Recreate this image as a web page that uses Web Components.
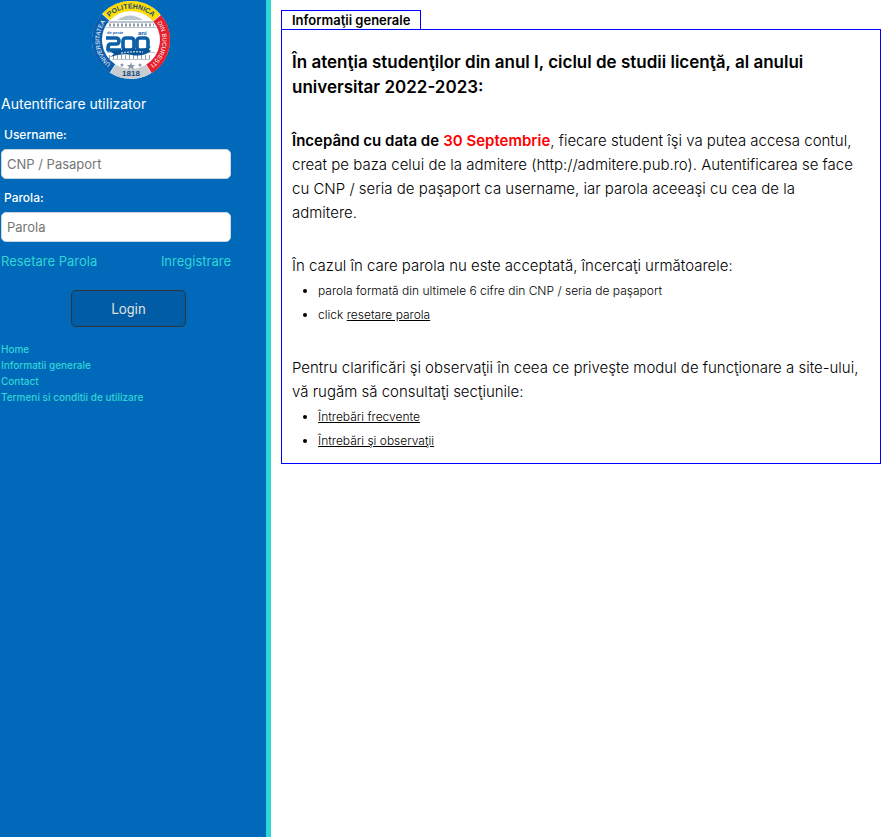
<!DOCTYPE html>
<html lang="ro">
<head>
<meta charset="utf-8">
<meta name="viewport" content="width=device-width, initial-scale=1">
<title>Informaţii generale</title>
<style>
  body { margin: 0; background: #fff; color: #000; font-family: Inter, "Open Sans", sans-serif; font-feature-settings: "locl" 0; }
</style>
</head>
<body>
<portal-layout>
  <portal-sidebar slot="side"></portal-sidebar>
  <info-panel>
    <span slot="title">Informaţii generale</span>
    <info-article></info-article>
  </info-panel>
</portal-layout>

<script>
function define(name, html) {
  const template = document.createElement('template');
  template.innerHTML = html;
  customElements.define(name, class extends HTMLElement {
    constructor() {
      super();
      this.attachShadow({ mode: 'open' }).append(template.content.cloneNode(true));
    }
  });
}

define('portal-layout', `
  <style>
    :host { display: grid; grid-template-columns: 271px minmax(0, 1fr); min-height: 100vh; }
    main { padding: 10px 3px 10px 10px; }
  </style>
  <slot name="side"></slot>
  <main><slot></slot></main>`);

define('university-logo', `
  <style>
    :host { display: block; width: 80px; height: 80px; }
    svg { display: block; width: 100%; height: 100%; }
    text { font-family: "Liberation Sans", sans-serif; font-weight: 700; }
    .side { font-weight: 400; }
  </style>
  <svg viewBox="-40 -40 80 80" role="img" aria-label="Universitatea Politehnica din Bucureşti">
    <defs>
      <path id="top" d="M-31.5 0A31.5 31.5 0 0 1 31.5 0"/>
      <path id="left" d="M0 31.5A31.5 31.5 0 0 1 0 -31.5"/>
      <path id="right" d="M0 -31.5A31.5 31.5 0 0 1 0 31.5"/>
    </defs>
    <circle r="39" fill="#e8f0f8"/>
    <g fill="none" stroke-width="10">
      <path stroke="#fddc00" d="M-24.9 -23.2A34 34 0 0 1 25.6 -22.3"/>
      <path stroke="#e6212d" d="M26.1 -21.7A34 34 0 0 1 18 28.8"/>
      <path stroke="#c9ccd0" d="M17.4 29.2A34 34 0 0 1 -18 28.8"/>
      <path stroke="#0b5fae" d="M-18.6 28.5A34 34 0 0 1 -25.4 -22.6"/>
    </g>
    <circle r="28.5" fill="#fff"/>
    <g fill="#b9c5d0">
      <path d="M-14 -20Q-1 -29 12 -20Z"/>
      <path d="M-23 -19H22V-17H-23ZM-25 -13H25V-12H-25Z"/>
      <path d="M-24 12H24V13H-24ZM-19 19H19V20H-19Z"/>
    </g>
    <path d="M-22 -15H23" stroke="#929da8" stroke-width="3" stroke-dasharray="2 2"/>
    <path d="M-22 17H22" stroke="#929da8" stroke-width="4" stroke-dasharray="1 3"/>
    <g fill="none" stroke="#0c60a8" stroke-width="3.6" stroke-linejoin="round">
      <path d="M-25 -2H-15Q-12 -2 -12 1T-15 4H-20Q-23 4 -23 8V10H-10"/>
      <rect x="-8" y="-2" width="11" height="12" rx="3"/>
      <rect x="6" y="-2" width="11" height="12" rx="3"/>
    </g>
    <path d="M-21 11L-17 14L-21 17Q-10 13 1 15T20 11L17 9L21 6Q13 10 3 9T-13 11Z" fill="#075395"/>
    <path d="M-10 13Q2 11 12 12" fill="none" stroke="#9ec4e2" stroke-width="1.5" stroke-dasharray="2 1"/>
    <text x="-24" y="-6" font-size="4" fill="#0b5fae">de peste</text>
    <text x="7" y="-5" font-size="6" fill="#0b5fae">ani</text>
    <g fill="#8c98a5">
      <path d="M0 22L1 25L4 25L2 27L3 30L0 28L-3 30L-2 27L-4 25L-1 25Z"/>
      <circle cx="-9" cy="25" r="1.5"/><circle cx="9" cy="25" r="1.5"/>
    </g>
    <text font-size="7" fill="#174b83" text-anchor="middle"><textPath href="#top" startOffset="50%">POLITEHNICA</textPath></text>
    <text class="side" font-size="6" fill="#fff" text-anchor="middle"><textPath href="#left" startOffset="46%">UNIVERSITATEA</textPath></text>
    <text class="side" font-size="6" fill="#fff" text-anchor="middle"><textPath href="#right" startOffset="55%">DIN BUCUREŞTI</textPath></text>
    <text y="36" font-size="8" fill="#174b83" text-anchor="middle">1818</text>
  </svg>`);

define('login-form', `
  <style>
    :host { display: block; }
    form { display: flex; flex-direction: column; width: 230px; color: #fff; }
    h2 { margin: 0; font-size: 14px; line-height: 20px; font-weight: 400; }
    label { margin-top: 9px; padding-left: 3px; font-size: 12px; line-height: 20px; font-weight: 500; }
    h2 + label { margin-top: 11px; }
    input { box-sizing: border-box; height: 30px; margin: 4px 0 0; padding: 0 5px; border: 1px solid #ccd6e0;
      border-radius: 5px; background: #fff; color: #333; font: 400 13px/20px Inter, sans-serif; }
    input::placeholder { color: #757575; opacity: 1; }
    nav { display: flex; justify-content: space-between; margin-top: 9px; font-size: 13px; line-height: 20px; }
    a { color: #30d5d5; text-decoration: none; }
    button { align-self: center; box-sizing: border-box; width: 115px; height: 37px; margin-top: 19px; margin-left: 25px;
      border: 1px solid #333; border-radius: 5px; background: #005ca4; color: #ddd; font: 400 14px/20px Roboto, sans-serif; }
  </style>
  <form>
    <h2>Autentificare utilizator</h2>
    <label for="user">Username:</label>
    <input id="user" type="text" placeholder="CNP / Pasaport">
    <label for="pass">Parola:</label>
    <input id="pass" type="password" placeholder="Parola">
    <nav><a href="#reset">Resetare Parola</a><a href="#register">Inregistrare</a></nav>
    <button type="submit">Login</button>
  </form>`);

define('side-menu', `
  <style>
    :host { display: block; }
    ul { margin: 0; padding: 0; list-style: none; font-size: 10px; line-height: 16px; font-weight: 500; }
    a { color: #30d5d5; text-decoration: none; }
  </style>
  <nav><ul>
    <li><a href="#home">Home</a></li>
    <li><a href="#info">Informatii generale</a></li>
    <li><a href="#contact">Contact</a></li>
    <li><a href="#terms">Termeni si conditii de utilizare</a></li>
  </ul></nav>`);

define('portal-sidebar', `
  <style>
    :host { display: flex; flex-direction: column; box-sizing: border-box; padding: 0 6px 0 1px;
      background: #0069b9; border-right: 5px solid #30d5d5; }
    university-logo { align-self: center; }
    login-form { margin-top: 14px; }
    side-menu { margin-top: 14px; }
  </style>
  <university-logo></university-logo>
  <login-form></login-form>
  <side-menu></side-menu>`);

define('info-panel', `
  <style>
    :host { display: block; }
    h1 { width: fit-content; margin: 0; padding: 0 10px; border: 1px solid #00f; border-bottom: 0;
      font-size: 13px; line-height: 18px; font-weight: 600; }
    section { padding: 20px 10px 10px; border: 1px solid #00f; }
  </style>
  <h1><slot name="title"></slot></h1>
  <section><slot></slot></section>`);

define('info-article', `
  <style>
    :host { display: block; font-size: 15px; line-height: 24px; font-weight: 300; }
    h2 { margin: 0; font-size: 17px; line-height: 25px; font-weight: 600; }
    p { margin: 29px 0 0; }
    b { font-weight: 600; }
    .date { color: #f00; }
    ul { margin: 1px 0 0; padding-left: 26px; font-size: 12px; }
    a { color: inherit; text-decoration: underline; }
  </style>
  <h2>În atenţia studenţilor din anul I, ciclul de studii licenţă, al anului universitar 2022-2023:</h2>
  <p><b>Începând cu data de</b> <b class="date">30 Septembrie</b>, fiecare student îşi va putea accesa contul, creat pe baza celui de la admitere (http://admitere.pub.ro). Autentificarea se face cu CNP / seria de paşaport ca username, iar parola aceeaşi cu cea de la<br>admitere.</p>
  <p>În cazul în care parola nu este acceptată, încercaţi următoarele:</p>
  <ul>
    <li>parola formată din ultimele 6 cifre din CNP / seria de paşaport</li>
    <li>click <a href="#reset">resetare parola</a></li>
  </ul>
  <p>Pentru clarificări şi observaţii în ceea ce priveşte modul de funcţionare a site-ului, vă rugăm să consultaţi secţiunile:</p>
  <ul>
    <li><a href="#faq">Întrebări frecvente</a></li>
    <li><a href="#feedback">Întrebări şi observaţii</a></li>
  </ul>`);
</script>
</body>
</html>
